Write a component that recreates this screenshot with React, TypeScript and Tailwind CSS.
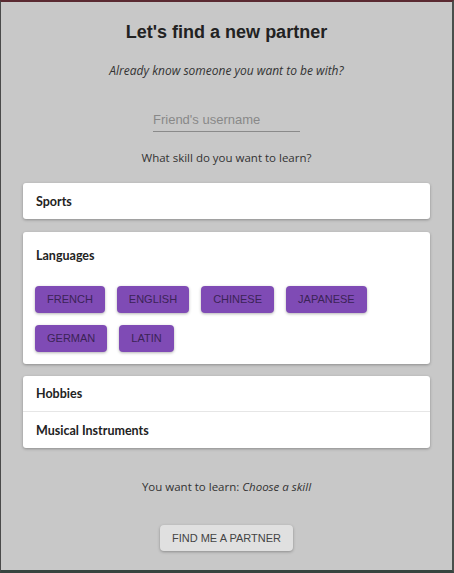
const languages = ["French", "English", "Chinese", "Japanese", "German", "Latin"];

const labelFont = { fontFamily: "Lato, 'Open Sans', sans-serif" };

function SkillButton({ label }: { label: string }) {
  return (
    <button
      className="h-[27px] px-3 rounded-[4px] bg-[#7f4bb5] text-[#3b2356] text-[11px] uppercase shadow-[0_1px_3px_rgba(0,0,0,0.3)]"
      style={{ fontFamily: "'Liberation Sans', Arial, sans-serif" }}
    >
      {label}
    </button>
  );
}

function Row({ label, divider }: { label: string; divider?: boolean }) {
  return (
    <div
      className={`h-[36px] px-[13px] pt-[2px] flex items-center text-[12.5px] font-bold text-[#222] ${divider ? "border-b border-b-[#e6e6e6]" : ""}`}
      style={labelFont}
    >
      {label}
    </div>
  );
}

export default function App() {
  return (
    <div className="w-[454px] h-[573px] border-t-2 border-t-[#5a2a31] border-l border-l-[#4a4a4a] border-r-2 border-r-[#4a4f4c] border-b-[3px] border-b-[#37443f] bg-[#c8c8c8]">
      <div
        className="h-full px-[22px] flex flex-col items-center text-[#333]"
        style={{ fontFamily: "'Open Sans', 'Noto Sans', sans-serif" }}
      >
        <h1
          className="mt-[18px] text-[18px] font-bold text-[#222] leading-[24px]"
          style={{ fontFamily: "'Liberation Sans', Arial, sans-serif" }}
        >
          Let's find a new partner
        </h1>
        <p className="mt-[18px] text-[12px] italic leading-[18px] text-[#333]">
          Already know someone you want to be with?
        </p>

        <input
          placeholder="Friend's username"
          className="mt-[28px] w-[147px] h-[24px] bg-transparent border-b border-b-[#8a8a8a] text-[13px] text-[#333] placeholder:text-[#888] outline-none"
          style={{ fontFamily: "'Liberation Sans', Arial, sans-serif" }}
        />

        <p className="mt-[17px] text-[11.5px] leading-[18px] text-[#333]">What skill do you want to learn?</p>

        <div className="mt-[16px] w-full flex flex-col">
          <div className="bg-white rounded-[3px] shadow-[0_1px_3px_rgba(0,0,0,0.3)]">
            <Row label="Sports" />
          </div>

          <div className="mt-[13px] bg-white rounded-[3px] shadow-[0_1px_3px_rgba(0,0,0,0.3)] px-[12px] pt-[15px] pb-[12px]">
            <div className="px-px text-[12.5px] font-bold text-[#222] leading-[18px]" style={labelFont}>
              Languages
            </div>
            <div className="mt-[21px] flex flex-wrap gap-x-[12px] gap-y-[12px]">
              {languages.map((l) => (
                <SkillButton key={l} label={l} />
              ))}
            </div>
          </div>

          <div className="mt-[12px] bg-white rounded-[3px] shadow-[0_1px_3px_rgba(0,0,0,0.3)] flex flex-col">
            <Row label="Hobbies" divider />
            <Row label="Musical Instruments" />
          </div>
        </div>

        <p className="mt-[30px] text-[11.5px] leading-[18px] text-[#333]">
          You want to learn: <span className="italic">Choose a skill</span>
        </p>

        <button
          className="mt-[29px] h-[26px] w-[133px] rounded-[4px] bg-[#e0e0e0] text-[11px] text-[#444] uppercase shadow-[0_1px_3px_rgba(0,0,0,0.3)]"
          style={{ fontFamily: "'Liberation Sans', Arial, sans-serif" }}
        >
          Find me a partner
        </button>
      </div>
    </div>
  );
}
